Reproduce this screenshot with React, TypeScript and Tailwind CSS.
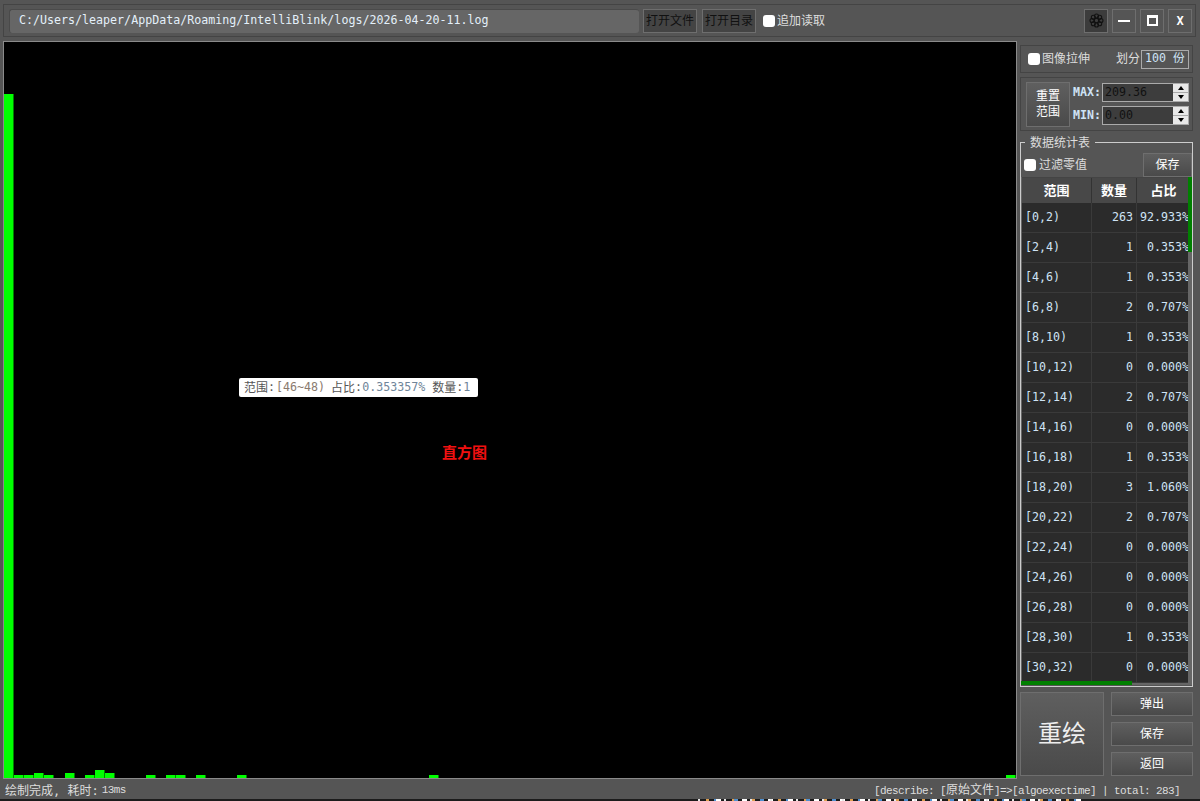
const mono = "font-['DejaVu_Sans_Mono','Noto_Sans_CJK_SC',monospace]";
const slab = "font-['Liberation_Mono','Noto_Sans_CJK_SC',monospace]";

const bars = [
  [4, 684], [14, 3], [24, 3], [34, 5], [44, 3], [65, 5], [85, 3], [95, 8], [105, 5],
  [146, 3], [166, 3], [176, 3], [196, 3], [237, 3], [429, 3], [1006, 3],
];

const rows = [
  ['[0,2)', '263', '92.933%'],
  ['[2,4)', '1', '0.353%'],
  ['[4,6)', '1', '0.353%'],
  ['[6,8)', '2', '0.707%'],
  ['[8,10)', '1', '0.353%'],
  ['[10,12)', '0', '0.000%'],
  ['[12,14)', '2', '0.707%'],
  ['[14,16)', '0', '0.000%'],
  ['[16,18)', '1', '0.353%'],
  ['[18,20)', '3', '1.060%'],
  ['[20,22)', '2', '0.707%'],
  ['[22,24)', '0', '0.000%'],
  ['[24,26)', '0', '0.000%'],
  ['[26,28)', '0', '0.000%'],
  ['[28,30)', '1', '0.353%'],
  ['[30,32)', '0', '0.000%'],
];

// stray pixels of the window behind, along the bottom edge
const specks = Array.from({ length: 64 }, (_, i) => ({
  x: 698 + i * 6 + (i % 3) * 2,
  w: 2 + (i % 4),
  c: ['#e8e8e8', '#e0a050', '#5090d0', '#ffffff'][i % 4],
}));

const Check = () => <span className="inline-block h-[12px] w-[12px] shrink-0 rounded-[3px] bg-white" />;

const SmallBtn = ({ label, dark }: { label: string; dark?: boolean }) => (
  <div className={`flex h-[24px] items-center justify-center border border-[#6e6e6e] text-[12px] ${dark ? 'w-[54px] bg-[#444] text-[#111]' : 'bg-gradient-to-b from-[#5f5f5f] to-[#4a4a4a] text-white'}`}>
    {label}
  </div>
);

const WinBtn = ({ children, dark }: { children: React.ReactNode; dark?: boolean }) => (
  <div className={`flex h-[24px] w-[24px] items-center justify-center border border-[#6e6e6e] font-bold text-white ${dark ? 'bg-[#3c3c3c]' : 'bg-[#555]'}`}>
    {children}
  </div>
);

const Spin = ({ label, value }: { label: string; value: string }) => (
  <div className="flex h-[19px] items-center">
    <span className={`${mono} w-[29px] text-[11.65px] font-bold text-[#cfe3f5]`}>{label}</span>
    <div className="flex h-[19px] w-[87px] border border-[#aaa] bg-[#3d3d3d]">
      <span className={`${mono} flex-1 pl-[2px] text-[11.65px] leading-[17px] text-[#111]`}>{value}</span>
      <div className="flex w-[15px] flex-col bg-[#e8e8e8]">
        <span className="flex flex-1 items-center justify-center border-b border-[#aaa]">
          <span className="h-0 w-0 border-x-[3px] border-b-[4px] border-x-transparent border-b-black" />
        </span>
        <span className="flex flex-1 items-center justify-center">
          <span className="h-0 w-0 border-x-[3px] border-t-[4px] border-x-transparent border-t-black" />
        </span>
      </div>
    </div>
  </div>
);

const Gear = () => (
  <svg width="15" height="15" viewBox="0 0 15 15" fill="none" stroke="#111" strokeWidth="1.1">
    <circle cx="7.5" cy="7.5" r="2.2" />
    <circle cx="7.5" cy="3" r="2" />
    <circle cx="7.5" cy="12" r="2" />
    <circle cx="3" cy="7.5" r="2" />
    <circle cx="12" cy="7.5" r="2" />
    <circle cx="4.3" cy="4.3" r="2" />
    <circle cx="10.7" cy="4.3" r="2" />
    <circle cx="4.3" cy="10.7" r="2" />
    <circle cx="10.7" cy="10.7" r="2" />
  </svg>
);

export default function App() {
  return (
    <div className={`${mono} flex h-[801px] w-[1200px] flex-col overflow-hidden bg-[#555]`}>
      {/* top bar */}
      <div className="mx-[3px] mt-[4px] flex h-[33px] w-[1193px] shrink-0 items-center border border-[#444] pl-[5px] pr-[3px]">
        <div className="flex h-[24px] w-[630px] items-center rounded-[3px] border-l border-t border-[#4a4a4a] bg-[#666] pl-[9px] text-[11.65px] text-[#e4f0fa]">
          C:/Users/leaper/AppData/Roaming/IntelliBlink/logs/2026-04-20-11.log
        </div>
        <div className="ml-[4px] flex gap-[5px]">
          <SmallBtn label="打开文件" dark />
          <SmallBtn label="打开目录" dark />
        </div>
        <div className="ml-[7px] flex items-center gap-[2px] text-[12px] text-[#ddd]">
          <Check />
          追加读取
        </div>
        <div className="ml-auto flex gap-[4px]">
          <WinBtn dark><Gear /></WinBtn>
          <WinBtn><span className="h-[2px] w-[12px] bg-white" /></WinBtn>
          <WinBtn><span className="h-[11px] w-[11px] border-2 border-t-[3px] border-white" /></WinBtn>
          <WinBtn><span className="text-[12px]">X</span></WinBtn>
        </div>
      </div>

      <div className="mt-[4px] flex flex-1 pl-[3px]">
        {/* chart */}
        <div className="relative h-[738px] w-[1014px] shrink-0 border border-[#8a8a8a] bg-black">
          <svg className="absolute left-[-4px] top-[-42px]" width="1020" height="780">
            {bars.map(([x, h]) => (
              <rect key={x} x={x} y={778 - h} width="9.5" height={h} fill="#0f0" />
            ))}
          </svg>
          <div className="absolute left-[235px] top-[336px] flex h-[19px] w-[239px] items-center rounded-[2px] bg-white pl-[5px] text-[11.65px] whitespace-nowrap text-[#555]">
            <span className="text-[12px]">范围</span>:<span className="ml-[1px] text-[#8a7a6e]">[46~48)</span>
            <span className="ml-[6px] text-[12px]">占比</span>:<span className="text-[#6f8599]">0.353357%</span>
            <span className="ml-[7px] text-[12px]">数量</span>:<span className="text-[#6f8599]">1</span>
          </div>
          <div className="absolute left-[438px] top-[400px] text-[15px] font-bold text-[#f01010]">直方图</div>
        </div>

        {/* side panel */}
        <div className="ml-[3px] flex w-[173px] flex-col">
          <div className="mt-[4px] flex h-[28px] items-center border border-[#444] pl-[7px] pr-[3px] text-[12px] text-[#ddd]">
            <Check />
            <span className="ml-[2px]">图像拉伸</span>
            <span className="ml-auto">划分</span>
            <div className="ml-[1px] flex h-[19px] w-[48px] items-center border border-[#aaa] pl-[3px] text-[11.65px] text-[#cfe3f5]">100 份</div>
          </div>

          <div className="mt-[4px] flex h-[54px] items-center border border-[#444] pl-[5px]">
            <div className="flex h-[45px] w-[44px] items-center justify-center border border-[#6e6e6e] bg-gradient-to-b from-[#5f5f5f] to-[#4a4a4a] text-center text-[12px] leading-[16px] text-white">
              重置<br />范围
            </div>
            <div className="ml-[3px] flex flex-col gap-[4px]">
              <Spin label="MAX:" value="209.36" />
              <Spin label="MIN:" value="0.00" />
            </div>
          </div>

          {/* stats group */}
          <div className="relative mt-[11px] h-[545px] border border-[#ccc] pt-[9px]">
            <span className="absolute left-[4px] top-[-8px] bg-[#555] px-[5px] text-[12px] leading-[16px] text-[#ddd]">数据统计表</span>
            <div className="flex h-[25px] items-center pl-[3px] text-[12px] text-[#ddd]">
              <Check />
              <span className="ml-[3px]">过滤零值</span>
              <div className="ml-auto w-[49px]"><SmallBtn label="保存" /></div>
            </div>
            <div className="relative h-[508px] bg-[#666] pl-[1px]">
              <div className="grid h-[26px] grid-cols-[70px_45px_51px] border-t border-[#444] text-[13px] font-bold text-white">
                <div className="flex items-center justify-center border-r border-[#333] bg-[#484848]">范围</div>
                <div className="flex items-center justify-center border-r border-[#333] bg-[#484848]">数量</div>
                <div className="flex items-center justify-center bg-[#484848] pl-[2px]">占比</div>
              </div>
              {rows.map(([range, count, pct]) => (
                <div key={range} className="grid h-[30px] w-[166px] grid-cols-[70px_45px_51px] overflow-hidden border-b border-[#3a3a3a] bg-[#2b2b2b] text-[11.65px] leading-[29px] text-[#cfe3f5]">
                  <div className="border-r border-[#3a3a3a] pl-[3px]">{range}</div>
                  <div className="border-r border-[#3a3a3a] pr-[3px] text-right">{count}</div>
                  <div className="mr-[-1px] text-right whitespace-nowrap">{pct}</div>
                </div>
              ))}
              <div className="absolute right-0 top-0 h-[75px] w-[4px] bg-[#008000]" />
              <div className="absolute bottom-0 left-0 h-[4px] w-[111px] bg-[#008000]" />
            </div>
          </div>

          {/* actions */}
          <div className="mt-[5px] flex h-[84px] gap-[7px]">
            <div className="flex w-[84px] items-center justify-center border border-[#6e6e6e] bg-gradient-to-b from-[#5f5f5f] to-[#4a4a4a] text-[24px] text-[#eee]">重绘</div>
            <div className="flex flex-1 flex-col gap-[6px]">
              <SmallBtn label="弹出" />
              <SmallBtn label="保存" />
              <SmallBtn label="返回" />
            </div>
          </div>
        </div>
      </div>

      {/* status bar */}
      <div className="flex h-[20px] shrink-0 items-center justify-between pl-[5px] pr-[20px] pt-[3px] text-[12px] text-[#ddd]">
        <span className="flex items-center">绘制完成, 耗时:<span className={`${slab} ml-[3px] text-[11px] tracking-[-0.6px]`}>13ms</span></span>
        <span className={`${slab} text-[11px] tracking-[-0.6px]`}>
          [describe: [<span className="text-[12px] tracking-normal">原始文件</span>]=&gt;[algoexectime] | total: 283]
        </span>
      </div>
      <svg className="block shrink-0" width="1200" height="2">
        <rect width="1200" height="2" fill="#1c1c1c" />
        {specks.map((s) => (
          <rect key={s.x} x={s.x} y="0" width={s.w} height="2" fill={s.c} />
        ))}
      </svg>
    </div>
  );
}
